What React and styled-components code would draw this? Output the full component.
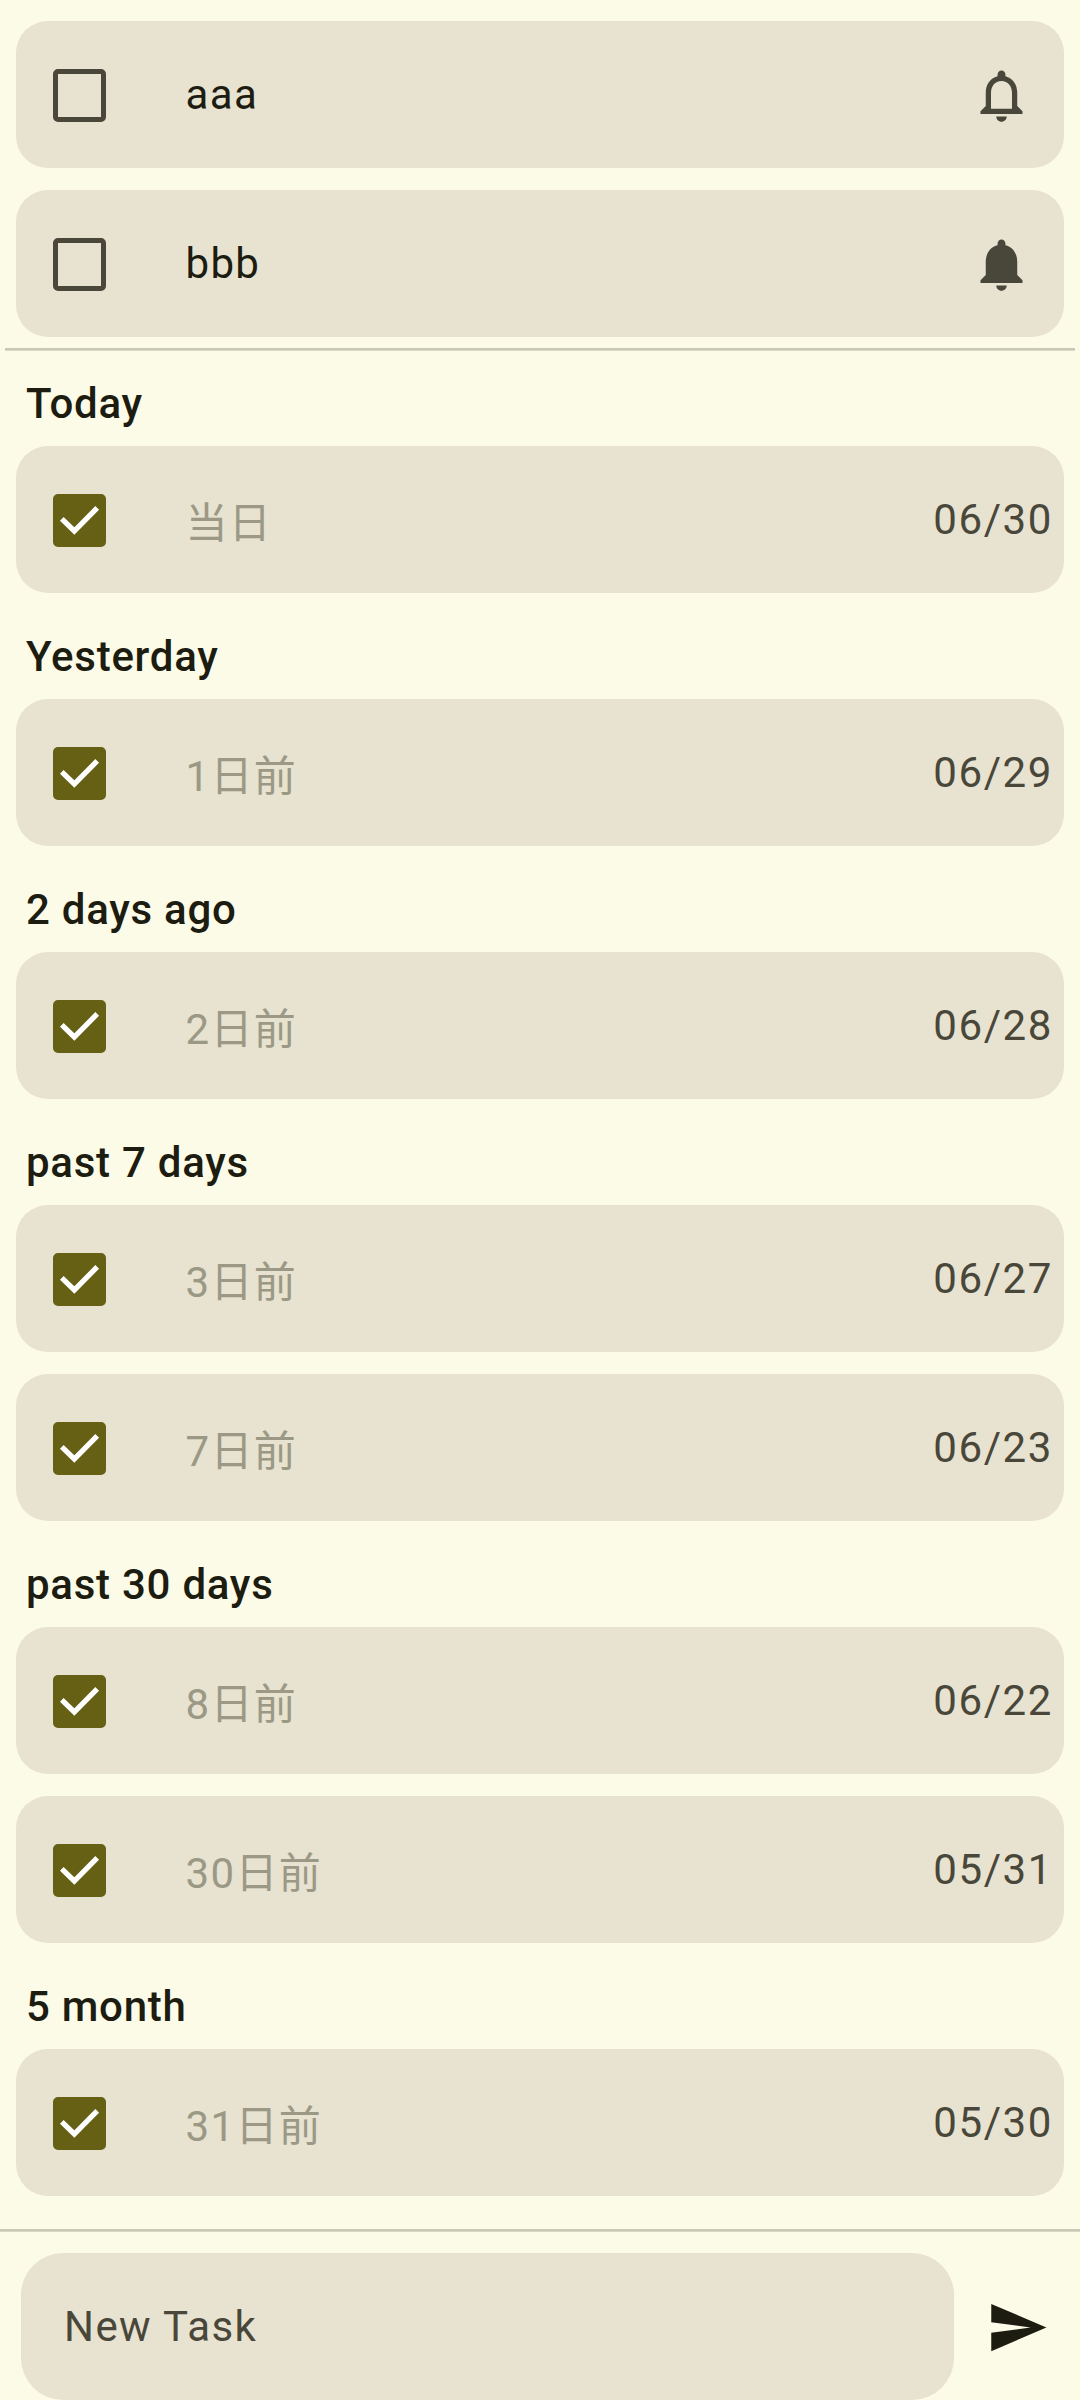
import React from "react";
import styled, { createGlobalStyle } from "styled-components";

const Global = createGlobalStyle`
  * { box-sizing: border-box; }
  body {
    margin: 0;
    background: #fcfbe8;
    font-family: Roboto, "Noto Sans CJK JP", sans-serif;
    color: #1c1c11;
  }
`;

const Screen = styled.main`
  width: 1080px;
  height: 2400px;
  display: flex;
  flex-direction: column;
  background: #fcfbe8;
  overflow: hidden;
`;

const TaskList = styled.ul`
  list-style: none;
  margin: 0;
  padding: 0 16px;
  display: flex;
  flex-direction: column;
  gap: 22px;
`;

const OpenTasks = styled.section`
  padding-top: 21px;
`;

const Divider = styled.hr`
  flex: none;
  height: 3px;
  border: 0;
  margin: ${(p) => p.$margin};
  background: linear-gradient(#c9c7b5 2px, #d9d7c5 2px);
`;

const Group = styled.section`
  & + & { padding-top: 11px; }
`;

const GroupTitle = styled.h2`
  margin: 0;
  height: 95px;
  padding: 21px 26px 0;
  font-size: 42px;
  line-height: 63px;
  font-weight: 500;
  letter-spacing: 0.74px;
`;

const Card = styled.li`
  height: 147px;
  border-radius: 32px;
  background: #e8e2d0;
  display: flex;
  align-items: center;
  padding: 0 11px 0 37px;
`;

const Box = styled.span`
  flex: none;
  width: 53px;
  height: 53px;
  margin-top: 2px;
  border-radius: 5px;
  border: 5px solid ${(p) => (p.$checked ? "#656014" : "#49473a")};
  background: ${(p) => (p.$checked ? "#656014" : "transparent")};
  display: flex;
  align-items: center;
  justify-content: center;
`;

const CheckMark = styled.svg`
  flex: none;
  width: 53px;
  height: 53px;
`;

const Label = styled.span`
  flex: 1;
  margin-left: 79.5px;
  padding-top: ${(p) => (p.$done ? "7px" : "0")};
  font-size: 42px;
  line-height: 63px;
  letter-spacing: 1.35px;
  color: ${(p) => (p.$done ? "#9b9985" : "#1c1c11")};
`;

const DateText = styled.time`
  font-size: 42px;
  line-height: 63px;
  letter-spacing: 1.6px;
  color: #49473a;
`;

const Icon = styled.svg`
  flex: none;
  width: 63px;
  height: 63px;
  margin-top: 2px;
  fill: ${(p) => p.$color};
  margin-right: ${(p) => p.$right};
`;

const Composer = styled.footer`
  display: flex;
  align-items: center;
  justify-content: space-between;
  padding: 0 0 0 21px;
`;

const Field = styled.div`
  width: 933px;
  height: 147px;
  border-radius: 42px;
  background: #e8e2d0;
  display: flex;
  align-items: center;
  padding-left: 43px;
  font-size: 42px;
  line-height: 63px;
  letter-spacing: 1.42px;
  color: #49473a;
`;

const BELL =
  "M12 22c1.1 0 2-.9 2-2h-4c0 1.1.89 2 2 2zm6-6v-5c0-3.07-1.64-5.64-4.5-6.32V4c0-.83-.67-1.5-1.5-1.5s-1.5.67-1.5 1.5v.68C7.63 5.36 6 7.92 6 11v5l-2 2v1h16v-1l-2-2z";
const BELL_HOLE = "m-2 1H8v-6c0-2.48 1.51-4.5 4-4.5s4 2.02 4 4.5v6z";

const openTasks = [
  { text: "aaa", reminder: false },
  { text: "bbb", reminder: true },
];

const groups = [
  { title: "Today", tasks: [["当日", "06/30"]] },
  { title: "Yesterday", tasks: [["1日前", "06/29"]] },
  { title: "2 days ago", tasks: [["2日前", "06/28"]] },
  { title: "past 7 days", tasks: [["3日前", "06/27"], ["7日前", "06/23"]] },
  { title: "past 30 days", tasks: [["8日前", "06/22"], ["30日前", "05/31"]] },
  { title: "5 month", tasks: [["31日前", "05/30"]] },
];

function Checkbox({ checked }) {
  return (
    <Box $checked={checked} role="checkbox" aria-checked={checked}>
      {checked && (
        <CheckMark viewBox="0 0 53 53">
          <path d="M8.8 24.9L21.3 37L44.2 13.9" fill="none" stroke="#fff" strokeWidth="5.25" />
        </CheckMark>
      )}
    </Box>
  );
}

function OpenTask({ text, reminder }) {
  return (
    <Card>
      <Checkbox checked={false} />
      <Label>{text}</Label>
      <Icon viewBox="0 0 24 24" $color="#49473a" $right="20.5px">
        <path d={reminder ? BELL : BELL + BELL_HOLE} />
      </Icon>
    </Card>
  );
}

function DoneTask({ text, date }) {
  return (
    <Card>
      <Checkbox checked />
      <Label $done>{text}</Label>
      <DateText>{date}</DateText>
    </Card>
  );
}

export default function App() {
  return (
    <>
      <Global />
      <Screen lang="ja">
        <OpenTasks>
          <TaskList>
            {openTasks.map((t) => (
              <OpenTask key={t.text} {...t} />
            ))}
          </TaskList>
        </OpenTasks>
        <Divider $margin="11px 5px 0" />
        {groups.map((g) => (
          <Group key={g.title}>
            <GroupTitle>{g.title}</GroupTitle>
            <TaskList>
              {g.tasks.map(([text, date]) => (
                <DoneTask key={text} text={text} date={date} />
              ))}
            </TaskList>
          </Group>
        ))}
        <Divider $margin="33px 0 21px" />
        <Composer>
          <Field>New Task</Field>
          <Icon viewBox="0 0 24 24" $color="#1c1c11" $right="31.5px">
            <path d="M2.01 21L23 12 2.01 3 2 10l15 2-15 2z" />
          </Icon>
        </Composer>
      </Screen>
    </>
  );
}
